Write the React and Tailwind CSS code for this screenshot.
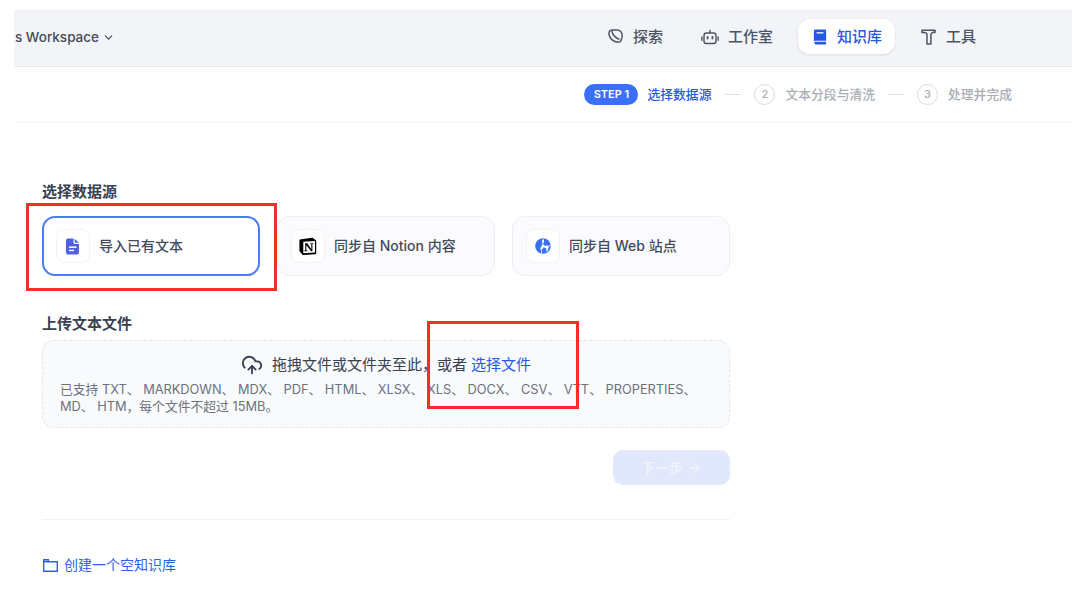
import React from 'react';
import { ChevronDown, CloudUpload, ArrowRight } from 'lucide-react';

const font = { fontFamily: 'Inter, "Noto Sans CJK SC", sans-serif' };

const ExploreIcon = () => (
  <svg width="15" height="15" viewBox="0 0 15 15" fill="none" stroke="#4b5563" strokeWidth="1.5" strokeLinejoin="round">
    <path d="M4 1h5a5.200 5.200 0 0 1 5.200 5.200c0 2.400-.5 3.900-1.300 5.500-.5 1.100-1.500 1.700-2.700 1.600C5.500 13 1.700 9.800 1 5.400.6 2.900 1.800 1 4 1Z" />
    <path d="M3.700 1.400c.6 4 3.300 7.400 7.800 9" />
  </svg>
);

const BotIcon = () => (
  <svg width="18" height="16" viewBox="0 0 18 16" fill="none" stroke="#4b5563" strokeWidth="1.4" strokeLinecap="round">
    <rect x="3" y="4" width="12" height="10.5" rx="2.5" />
    <path d="M9 4V1.500M.9 8v3.200M17.100 8v3.200" />
    <path d="M6.600 8v1.600M11.400 8v1.600" strokeWidth="1.8" />
  </svg>
);

const BookIcon = () => (
  <svg width="14" height="16" viewBox="0 0 14 16" fill="#2558e8">
    <path d="M2.400.6h9.800c.5 0 .9.400.9.900v10.200H2.600c-.7 0-1.300.3-1.700.7V2.100C.9 1.300 1.600.6 2.400.6Z" />
    <path d="M2.600 12.800h10.500v2.600H2.600a1.300 1.300 0 0 1 0-2.600Z" />
    <rect x="3.600" y="3.200" width="6.800" height="1.300" fill="#ffffff" />
  </svg>
);

const HammerIcon = () => (
  <svg width="15" height="16" viewBox="0 0 15 16" fill="none" stroke="#4b5563" strokeWidth="1.5" strokeLinejoin="round">
    <path d="M1 1.200h13v2.200c-1.500-.3-2.800.1-3.600 1.100-.4.5-.5 1-.5 1.700V15H6V5.600C6 3.800 4 3 1 3.600V1.200Z" />
  </svg>
);

const DocIcon = () => (
  <svg width="14" height="17" viewBox="0 0 14 17">
    <path d="M2 .5h5.500v3.700c0 1 .8 1.800 1.800 1.800H13v8.500a2 2 0 0 1-2 2H2a2 2 0 0 1-2-2v-12a2 2 0 0 1 2-2Z" fill="#4f5fe0" />
    <path d="M8.700.7 12.800 4.800H9.700a1 1 0 0 1-1-1Z" fill="#4f5fe0" />
    <rect x="3" y="8.400" width="7.500" height="1.500" fill="#ffffff" />
    <rect x="3" y="11.700" width="5" height="1.500" fill="#ffffff" />
  </svg>
);

const NotionIcon = () => (
  <svg width="18" height="18" viewBox="0 0 18 18">
    <path d="M.8 2.600 12.800.8c.5 0 .9.100 1.300.4l2.500 1.800c.4.300.6.500.6 1v12c0 .8-.4 1.300-1.200 1.300l-11.400.7c-.7 0-1-.1-1.400-.6L.9 14.600c-.3-.4-.5-.7-.5-1.200V3.600c0-.5.100-.9.400-1Z" fill="#000000" />
    <path d="M4.300 4.700 16 4v11.600l-11.700.7Z" fill="#ffffff" />
    <path d="M6 6.200h2.300l4 6V7.100l-1-.2v-.7h3v.7l-.9.200v7.100h-1.200L7.300 8.300v4.900l1.100.3v.7h-3v-.7l.8-.3V7L6 6.900Z" fill="#000000" />
  </svg>
);

const GlobeIcon = () => (
  <svg width="16" height="16" viewBox="0 0 16 16">
    <circle cx="8" cy="8" r="7.800" fill="#3b71ee" />
    <path d="M7.900.5C9 1.700 9.300 3 8.900 4.100L8 5.900l2.200 2 2.300-.6.700 1 2.300-1.500.2 1-2 .9-1.200 4.600-.9.500-.3-3.400-2.500-1.200-2.200 2.700.3 3.200-1-.2.100-3.400-.9-.7L7.600 6 7 3.400Z" fill="#ffffff" />
  </svg>
);

const FolderIcon = () => (
  <svg width="15" height="13" viewBox="0 0 15 13" fill="none" stroke="#2f5fe8" strokeWidth="1.4">
    <path d="M.7.700h4.600v2h9v9.600H.7Z" />
    <path d="M.7 2.700h4.600" />
  </svg>
);

const NavItem = ({ icon, label, className }) => (
  <div className={`flex items-center h-[35px] text-[15px] font-medium ${className}`}>
    {icon}
    <span className="mt-px">{label}</span>
  </div>
);

const SourceCard = ({ icon, label, active }) => (
  <div className={`flex items-center gap-[9px] w-[218px] h-[60px] rounded-[13px] ${active ? 'px-[12px] bg-white border-2 border-[#4a7cf0]' : 'px-[13px] bg-[#fbfbfd] border border-[#eceef3]'}`}>
    <div className="flex items-center justify-center w-[34px] h-[34px] rounded-[8px] bg-white border border-[#f2f3f6]">
      {icon}
    </div>
    <span className="mb-px text-[14px] font-medium text-[#434b5b]">{label}</span>
  </div>
);

const StepCircle = ({ n }) => (
  <div className="flex items-center justify-center w-[21px] h-[21px] rounded-full border border-[#d9dce2] text-[11px] font-medium text-[#a9adb5]">
    {n}
  </div>
);

export default function App() {
  return (
    <div className="relative w-[1080px] h-[593px] bg-white overflow-hidden pt-[10px] pl-[14px] pr-[8px]" style={font}>
      {/* top bar */}
      <header className="flex items-center justify-between h-[57px] bg-[#f3f4f8] border-b border-[#e4e6eb] overflow-hidden">
        <div className="flex items-center gap-[3px] pl-px mb-[2px] text-[13.5px] font-medium text-[#424b5c]">
          <span>s Workspace</span>
          <ChevronDown size={13} strokeWidth={2} />
        </div>
        <nav className="flex items-center gap-[8px] pr-[81px] mb-[3px]">
          <NavItem icon={<ExploreIcon />} label="探索" className="px-[15px] gap-[10px] text-[#4b5563]" />
          <NavItem icon={<BotIcon />} label="工作室" className="px-[15px] gap-[9px] text-[#4b5563]" />
          <NavItem
            icon={<BookIcon />}
            label="知识库"
            className="ml-[2px] mr-[3px] pl-[15px] pr-[13px] gap-[10px] rounded-[12px] bg-white text-[#2558e8] shadow-[0_1px_3px_rgba(16,24,40,0.1)]"
          />
          <NavItem icon={<HammerIcon />} label="工具" className="px-[15px] gap-[10px] text-[#4b5563]" />
        </nav>
      </header>

      {/* steps */}
      <div className="flex items-center justify-end h-[56px] pr-[60px] border-b border-[#f3f4f6] text-[12.8px] font-medium">
        <div className="flex items-center justify-center w-[54px] h-[21px] rounded-full bg-[#3b6ff6] text-white text-[11px] font-semibold">STEP 1</div>
        <span className="ml-[9px] text-[#2558e8]">选择数据源</span>
        <div className="ml-[13px] w-[17px] h-px bg-[#dfe1e6]" />
        <div className="ml-[13px]"><StepCircle n="2" /></div>
        <span className="ml-[10px] text-[#a9adb5]">文本分段与清洗</span>
        <div className="ml-[13px] w-[16px] h-px bg-[#dfe1e6]" />
        <div className="ml-[13px]"><StepCircle n="3" /></div>
        <span className="ml-[10px] text-[#a9adb5]">处理并完成</span>
      </div>

      {/* main */}
      <main className="w-[688px] ml-[28px] pt-[58px]">
        <h2 className="text-[15px] leading-[22px] font-semibold text-[#374151]">选择数据源</h2>
        <div className="flex gap-[17px] mt-[13px]">
          <SourceCard icon={<DocIcon />} label="导入已有文本" active />
          <SourceCard icon={<NotionIcon />} label="同步自 Notion 内容" />
          <SourceCard icon={<GlobeIcon />} label="同步自 Web 站点" />
        </div>

        <h2 className="mt-[37px] text-[15px] leading-[22px] font-semibold text-[#374151]">上传文本文件</h2>
        <div className="mt-[5px] h-[88px] px-[17px] pt-[13px] rounded-[12px] border border-dashed border-[#e4e6eb] bg-[#f9fafb]">
          <div className="flex items-center justify-center gap-[9px] h-[22px] text-[15px] text-[#374151]">
            <CloudUpload size={22} strokeWidth={2} color="#374151" />
            <span>
              拖拽文件或文件夹至此，或者 <span className="text-[#2558e8]">选择文件</span>
            </span>
          </div>
          <p className="mt-[5px] text-[12.8px] leading-[17px] text-[#6b7280]">
            已支持 TXT、 MARKDOWN、 MDX、 PDF、 HTML、 XLSX、 XLS、 DOCX、 CSV、 VTT、 PROPERTIES、 MD、 HTM，每个文件不超过 15MB。
          </p>
        </div>

        <div className="flex justify-end mt-[22px]">
          <button className="flex items-center justify-center gap-[4px] w-[117px] h-[35px] rounded-[10px] bg-[#e2e8fb] text-[14px] font-medium text-[#f3f5fd]">
            下一步 <ArrowRight size={15} strokeWidth={2} />
          </button>
        </div>

        <div className="mt-[34px] h-px bg-[#f0f1f4]" />

        <div className="flex items-center gap-[6px] mt-[35px] pl-px text-[14px] leading-[20px] text-[#2f5fe8]">
          <FolderIcon />
          <span>创建一个空知识库</span>
        </div>
      </main>

      {/* red annotation boxes */}
      <div className="absolute left-[26px] top-[203px] w-[251px] h-[88px] border-[3px] border-[#ee3124]" />
      <div className="absolute left-[427px] top-[321px] w-[152px] h-[88px] border-[3px] border-[#ee3124]" />
    </div>
  );
}
